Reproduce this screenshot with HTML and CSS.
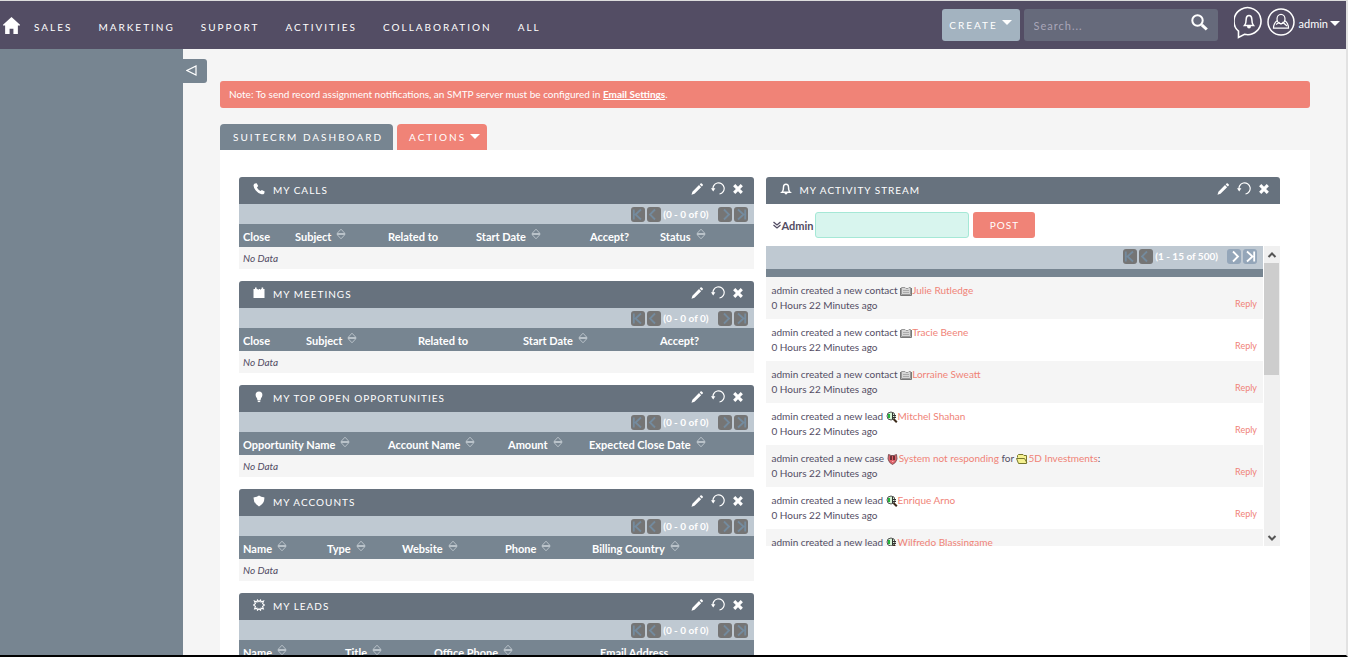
FILE: index.html
```
<!DOCTYPE html>
<html lang="en">
<head>
<meta charset="utf-8">
<title>SuiteCRM Dashboard</title>
<link rel="stylesheet" href="styles.css">
</head>
<body>
<svg class="sprite" aria-hidden="true">
  <symbol id="pencil" viewBox="0 0 12 12"><path fill="currentColor" d="M0.5 11.7 1.4 8.7 8 2.1 10.1 4.2 3.5 10.8ZM8.7 1.4 9.8 0.3Q10.3 0 10.8 0.4L11.8 1.4Q12.1 1.9 11.8 2.4L10.8 3.5Z"/></symbol>
  <symbol id="refresh" viewBox="0 0 14 13"><path fill="none" stroke="currentColor" stroke-width="1.2" d="M2.2 8A5.6 5.6 0 1 1 8.5 12"/><path fill="currentColor" d="M0 6.2H4.4L2.2 9.4Z"/></symbol>
  <symbol id="close" viewBox="0 0 10 10"><path stroke="currentColor" stroke-width="3.1" d="M1.2 1.2 8.8 8.8M8.8 1.2 1.2 8.8"/></symbol>
  <symbol id="sort" viewBox="0 0 10 12"><path fill="none" stroke="currentColor" d="M1 5.500 5 1.200 9 5.500ZM1 6.500 5 10.800 9 6.500Z"/></symbol>
  <symbol id="first" viewBox="0 0 14 15"><path fill="none" stroke="currentColor" stroke-width="1.8" d="M2.8 2.5V12.5M10 2.5 4.5 7.5 10 12.5"/></symbol>
  <symbol id="prev" viewBox="0 0 14 15"><path fill="none" stroke="currentColor" stroke-width="1.8" d="M8 2.5 3 7.5 8 12.5"/></symbol>
  <symbol id="next" viewBox="0 0 14 15"><path fill="none" stroke="currentColor" stroke-width="1.8" d="M6 2.5 11 7.5 6 12.5"/></symbol>
  <symbol id="last" viewBox="0 0 14 15"><path fill="none" stroke="currentColor" stroke-width="1.8" d="M11.2 2.5V12.5M4 2.5 9.5 7.5 4 12.5"/></symbol>
  <symbol id="bell" viewBox="0 0 12 12"><path fill="none" stroke="currentColor" stroke-width="1.4" d="M2 9.2Q3.5 8 3.5 4Q3.5 1.2 6 1.2T8.5 4Q8.5 8 10 9.2Z"/><path fill="currentColor" d="M4.4 9.5H7.6Q7.4 11.6 6 11.6T4.4 9.5Z"/></symbol>
  <symbol id="phone" viewBox="0 0 12 12"><path fill="currentColor" d="M1.8 0.5 3.7 0.2 5.2 3 3.9 4.5Q5 6.7 7.4 8.1L8.9 7 11.7 8.6 11.2 10.5Q10.2 11.6 8.6 11.3Q5.2 10.4 2.8 7.4Q0.6 4.6 0.5 2.4Q0.7 1 1.8 0.5Z"/></symbol>
  <symbol id="calendar" viewBox="0 0 12 12"><path fill="currentColor" d="M0.5 3H11.5V11H0.5ZM0.5 2H2V0.5H3.6V2H4.8V3.4H0.5ZM5.5 2H7V3.4H5.5ZM7.5 2H8.6V0.5H10.2V2H11.5V3.4H7.5Z"/></symbol>
  <symbol id="bulb" viewBox="0 0 12 12"><path fill="currentColor" d="M6 0.5Q9.4 0.8 9.4 4Q9.3 5.8 8 7.3L7.6 9H4.4L4 7.3Q2.7 5.8 2.6 4Q2.6 0.8 6 0.5ZM4.6 9.4H7.4V10.6Q6 11.8 4.6 10.6Z"/></symbol>
  <symbol id="shield" viewBox="0 0 12 12"><path fill="currentColor" d="M6 0.6Q8.4 2.4 11.3 2.2Q12 8 6 11.4Q0 8 0.7 2.2Q3.6 2.4 6 0.6Z"/></symbol>
  <symbol id="gear" viewBox="0 0 12 12"><path fill="none" stroke="currentColor" stroke-width="1.1" d="M6 2.600 7.600 1 8 3 10.600 2 9.600 4.600 11.400 6 9.600 7.400 10.400 9.900 8 9.200 7.600 11.200 6 9.800 4.400 11.200 4 9.200 1.600 9.900 2.400 7.400 0.600 6 2.400 4.600 1.400 2 4 3 4.400 1Z"/></symbol>
  <symbol id="contact" viewBox="0 0 12 12"><path fill="#d5d5d5" stroke="#999" d="M1.5 2.5H5L6 3.5H8L9 2.5H10.5V9.5H1.5Z"/><path stroke="#777" d="M.5 3V10.500H11.500V3" fill="none"/><path stroke="#aaa" d="M3 5.500H9M3 7.500H9"/></symbol>
  <symbol id="lead" viewBox="0 0 12 12"><circle cx="5" cy="5" r="4" fill="#d8f5d8" stroke="#555"/><path stroke="#3b2a1a" stroke-width="2" d="M7.5 8 10.800 11.300"/><path stroke="#22b53a" stroke-width="2" d="M3 3V7"/><path stroke="#333" d="M6.500 2V8M7 4.500H10M7 6.500H10"/></symbol>
  <symbol id="case" viewBox="0 0 12 12"><path fill="#e0626a" stroke="#80565a" d="M1.500 1.500 4 2.500H7L9.500 1.500 10 6Q9 10 5.500 11.500Q2 10 1 6Z"/><path stroke="#4b2226" stroke-width="1.500" d="M4 3V7M7 3V7"/><path stroke="#f9b4b4" d="M5 8.500H6.500"/></symbol>
  <symbol id="account" viewBox="0 0 12 12"><path fill="#f5f190" stroke="#77772f" d="M1.500 4.500V2.500L2.500 1.500H7L8 2.500H10.500V10.500H2.500L.5 5.500H8.500L11 10"/></symbol>
</svg>

<header class="topbar">
  <a class="home" href="#" aria-label="Home"><svg viewBox="0 0 16 16"><path fill="#fff" d="M8 0 16 7.300V8H14V16H9.800V11H6.200V16H2V8H0V7.300Z"/></svg></a>
  <nav class="menu">
    <a href="#">SALES</a><a href="#">MARKETING</a><a href="#">SUPPORT</a><a href="#">ACTIVITIES</a><a href="#">COLLABORATION</a><a href="#">ALL</a>
  </nav>
  <div class="tools">
    <button class="create">CREATE<span class="caret"></span></button>
    <form class="search">
      <input type="text" placeholder="Search..." aria-label="Search">
      <button type="button" aria-label="Run search"><svg viewBox="0 0 17 17"><circle cx="6.500" cy="6.500" r="5.200" fill="none" stroke="#fff" stroke-width="2"/><path stroke="#fff" stroke-width="3" d="M10.800 10.800 15.800 15.500"/></svg></button>
    </form>
    <button class="round" aria-label="Alerts"><svg viewBox="0 0 30 33"><path fill="none" stroke="#fff" stroke-width="1.600" d="M4.500 25.200A13.500 13.500 0 1 1 10.500 28.300L4.500 31.500Z"/><path fill="none" stroke="#fff" stroke-width="1.500" d="M10.500 19.500Q12.200 17.500 12.200 13Q12.400 9.500 15 9.500T17.800 13Q17.800 17.500 19.500 19.500Z"/><path fill="#fff" d="M13 20H17Q17 22.500 15 22.500T13 20Z"/></svg></button>
    <button class="user"><svg viewBox="0 0 28 28"><circle cx="14" cy="14" r="13" fill="none" stroke="#fff" stroke-width="1.500"/><g fill="none" stroke="#fff" stroke-width="1.200"><ellipse cx="14" cy="11" rx="4" ry="4.700"/><path d="M10.500 12.500Q6.500 15 6.500 20.200H21.500Q21.500 15 17.500 12.500M9 16.500 12 14.500Q14 17.500 16 14.500L20 18"/></g></svg>admin<span class="caret"></span></button>
  </div>
</header>

<div class="layout">
  <aside class="sidebar"><button class="toggle" aria-label="Collapse sidebar"><svg viewBox="0 0 11 11"><path fill="none" stroke="#fff" stroke-width="1.200" d="M10 1V10L1 5.500Z"/></svg></button></aside>
  <main class="content">
    <p class="alert">Note: To send record assignment notifications, an SMTP server must be configured in <a href="#">Email Settings</a>.</p>
    <div class="tabs"><button class="tab">SUITECRM DASHBOARD</button><button class="tab actions">ACTIONS<span class="caret"></span></button></div>
    <div class="board">
      <div class="column">
        <section class="dashlet">
          <div class="head"><svg class="kind"><use href="#phone"/></svg><h2>MY CALLS</h2><button aria-label="Edit"><svg><use href="#pencil"/></svg></button><button aria-label="Refresh"><svg class="wide"><use href="#refresh"/></svg></button><button aria-label="Close"><svg class="small"><use href="#close"/></svg></button></div>
          <div class="pager"><button disabled aria-label="First"><svg><use href="#first"/></svg></button><button disabled aria-label="Previous"><svg><use href="#prev"/></svg></button><span>(0 - 0 of 0)</span><button disabled aria-label="Next"><svg><use href="#next"/></svg></button><button disabled aria-label="Last"><svg><use href="#last"/></svg></button></div>
          <table class="calls"><thead><tr><th>Close</th><th>Subject<svg><use href="#sort"/></svg></th><th>Related to</th><th>Start Date<svg><use href="#sort"/></svg></th><th>Accept?</th><th>Status<svg><use href="#sort"/></svg></th></tr></thead><tbody><tr><td colspan="6">No Data</td></tr></tbody></table>
        </section>
        <section class="dashlet">
          <div class="head"><svg class="kind"><use href="#calendar"/></svg><h2>MY MEETINGS</h2><button aria-label="Edit"><svg><use href="#pencil"/></svg></button><button aria-label="Refresh"><svg class="wide"><use href="#refresh"/></svg></button><button aria-label="Close"><svg class="small"><use href="#close"/></svg></button></div>
          <div class="pager"><button disabled aria-label="First"><svg><use href="#first"/></svg></button><button disabled aria-label="Previous"><svg><use href="#prev"/></svg></button><span>(0 - 0 of 0)</span><button disabled aria-label="Next"><svg><use href="#next"/></svg></button><button disabled aria-label="Last"><svg><use href="#last"/></svg></button></div>
          <table class="meetings"><thead><tr><th>Close</th><th>Subject<svg><use href="#sort"/></svg></th><th>Related to</th><th>Start Date<svg><use href="#sort"/></svg></th><th>Accept?</th></tr></thead><tbody><tr><td colspan="5">No Data</td></tr></tbody></table>
        </section>
        <section class="dashlet">
          <div class="head"><svg class="kind"><use href="#bulb"/></svg><h2>MY TOP OPEN OPPORTUNITIES</h2><button aria-label="Edit"><svg><use href="#pencil"/></svg></button><button aria-label="Refresh"><svg class="wide"><use href="#refresh"/></svg></button><button aria-label="Close"><svg class="small"><use href="#close"/></svg></button></div>
          <div class="pager"><button disabled aria-label="First"><svg><use href="#first"/></svg></button><button disabled aria-label="Previous"><svg><use href="#prev"/></svg></button><span>(0 - 0 of 0)</span><button disabled aria-label="Next"><svg><use href="#next"/></svg></button><button disabled aria-label="Last"><svg><use href="#last"/></svg></button></div>
          <table class="opportunities"><thead><tr><th>Opportunity Name<svg><use href="#sort"/></svg></th><th>Account Name<svg><use href="#sort"/></svg></th><th>Amount<svg><use href="#sort"/></svg></th><th>Expected Close Date<svg><use href="#sort"/></svg></th></tr></thead><tbody><tr><td colspan="4">No Data</td></tr></tbody></table>
        </section>
        <section class="dashlet">
          <div class="head"><svg class="kind"><use href="#shield"/></svg><h2>MY ACCOUNTS</h2><button aria-label="Edit"><svg><use href="#pencil"/></svg></button><button aria-label="Refresh"><svg class="wide"><use href="#refresh"/></svg></button><button aria-label="Close"><svg class="small"><use href="#close"/></svg></button></div>
          <div class="pager"><button disabled aria-label="First"><svg><use href="#first"/></svg></button><button disabled aria-label="Previous"><svg><use href="#prev"/></svg></button><span>(0 - 0 of 0)</span><button disabled aria-label="Next"><svg><use href="#next"/></svg></button><button disabled aria-label="Last"><svg><use href="#last"/></svg></button></div>
          <table class="accounts"><thead><tr><th>Name<svg><use href="#sort"/></svg></th><th>Type<svg><use href="#sort"/></svg></th><th>Website<svg><use href="#sort"/></svg></th><th>Phone<svg><use href="#sort"/></svg></th><th>Billing Country<svg><use href="#sort"/></svg></th></tr></thead><tbody><tr><td colspan="5">No Data</td></tr></tbody></table>
        </section>
        <section class="dashlet">
          <div class="head"><svg class="kind"><use href="#gear"/></svg><h2>MY LEADS</h2><button aria-label="Edit"><svg><use href="#pencil"/></svg></button><button aria-label="Refresh"><svg class="wide"><use href="#refresh"/></svg></button><button aria-label="Close"><svg class="small"><use href="#close"/></svg></button></div>
          <div class="pager"><button disabled aria-label="First"><svg><use href="#first"/></svg></button><button disabled aria-label="Previous"><svg><use href="#prev"/></svg></button><span>(0 - 0 of 0)</span><button disabled aria-label="Next"><svg><use href="#next"/></svg></button><button disabled aria-label="Last"><svg><use href="#last"/></svg></button></div>
          <table class="leads"><thead><tr><th>Name<svg><use href="#sort"/></svg></th><th>Title<svg><use href="#sort"/></svg></th><th>Office Phone<svg><use href="#sort"/></svg></th><th>Email Address</th></tr></thead></table>
        </section>
      </div>
      <div class="column">
        <section class="dashlet">
          <div class="head"><svg class="kind"><use href="#bell"/></svg><h2>MY ACTIVITY STREAM</h2><button aria-label="Edit"><svg><use href="#pencil"/></svg></button><button aria-label="Refresh"><svg class="wide"><use href="#refresh"/></svg></button><button aria-label="Close"><svg class="small"><use href="#close"/></svg></button></div>
          <form class="post"><svg viewBox="0 0 8 8"><path fill="none" stroke="#534d64" stroke-width="1.300" d="M.5 1 4 4 7.500 1M.5 4 4 7 7.500 4"/></svg><label for="status">Admin</label><input id="status" type="text"><button type="button">POST</button></form>
          <div class="stream">
            <div class="feed">
              <div class="pager"><button disabled aria-label="First"><svg><use href="#first"/></svg></button><button disabled aria-label="Previous"><svg><use href="#prev"/></svg></button><span>(1 - 15 of 500)</span><button aria-label="Next"><svg><use href="#next"/></svg></button><button aria-label="Last"><svg><use href="#last"/></svg></button></div>
              <ul>
                <li><div>admin created a new contact <svg><use href="#contact"/></svg><a href="#">Julie Rutledge</a><br><time>0 Hours 22 Minutes ago</time></div><a class="reply" href="#">Reply</a></li>
                <li><div>admin created a new contact <svg><use href="#contact"/></svg><a href="#">Tracie Beene</a><br><time>0 Hours 22 Minutes ago</time></div><a class="reply" href="#">Reply</a></li>
                <li><div>admin created a new contact <svg><use href="#contact"/></svg><a href="#">Lorraine Sweatt</a><br><time>0 Hours 22 Minutes ago</time></div><a class="reply" href="#">Reply</a></li>
                <li><div>admin created a new lead <svg><use href="#lead"/></svg><a href="#">Mitchel Shahan</a><br><time>0 Hours 22 Minutes ago</time></div><a class="reply" href="#">Reply</a></li>
                <li><div>admin created a new case <svg><use href="#case"/></svg><a href="#">System not responding</a> for <svg><use href="#account"/></svg><a href="#">5D Investments</a>:<br><time>0 Hours 22 Minutes ago</time></div><a class="reply" href="#">Reply</a></li>
                <li><div>admin created a new lead <svg><use href="#lead"/></svg><a href="#">Enrique Arno</a><br><time>0 Hours 22 Minutes ago</time></div><a class="reply" href="#">Reply</a></li>
                <li><div>admin created a new lead <svg><use href="#lead"/></svg><a href="#">Wilfredo Blassingame</a></div></li>
              </ul>
            </div>
            <div class="scrollbar"><svg viewBox="0 0 16 17"><path fill="none" stroke="#555" stroke-width="2" d="M4.500 11 8 7.500 11.500 11"/></svg><i></i><svg viewBox="0 0 16 17"><path fill="none" stroke="#555" stroke-width="2" d="M4.500 7 8 10.500 11.500 7"/></svg></div>
          </div>
        </section>
      </div>
    </div>
  </main>
</div>
</body>
</html>
```
FILE: styles.css
```
* { box-sizing: border-box; }
html { height: 100%; }
body {
  margin: 0;
  height: 100vh;
  overflow: hidden;
  display: flex;
  flex-direction: column;
  border-top: 1px solid #ddd;
  border-bottom: 2px solid #000;
  border-right: 2px solid #e2e2e2;
  background: #f5f5f5;
  color: #534d64;
  font: 10px/15px Lato, sans-serif;
}
.sprite { position: absolute; width: 0; height: 0; }
button, input { font: inherit; color: inherit; border: 0; padding: 0; margin: 0; background: none; }
button { cursor: pointer; }
a { color: #f08377; text-decoration: none; }
svg { display: block; flex: none; }
.caret {
  display: inline-block;
  border: 5px solid transparent;
  border-top-color: #fff;
  border-bottom: 0;
}

.topbar {
  flex: none;
  height: 48px;
  display: flex;
  align-items: center;
  padding: 0 6px 0 3px;
  background: #534d64;
  color: #fff;
}
.home svg { width: 17px; height: 17px; }
.menu { display: flex; gap: 26px; margin-left: 14px; padding-top: 4px; }
.menu a { color: #fff; letter-spacing: 2px; }
.tools { display: flex; align-items: center; margin-left: auto; }
.create {
  width: 78px;
  height: 32px;
  display: flex;
  align-items: center;
  justify-content: center;
  gap: 4px;
  border-radius: 3px;
  background: #a3b3c0;
  letter-spacing: 2px;
}
.create .caret { margin-bottom: 5px; }
.search {
  width: 194px;
  height: 32px;
  display: flex;
  align-items: center;
  margin: 0 16px 0 4px;
  padding: 0 10px;
  border-radius: 3px;
  background: #666a7b;
}
.search input { flex: 1; min-width: 0; font-size: 11px; letter-spacing: 1px; outline: 0; }
.search input::placeholder { color: #a9a6b9; opacity: 1; }
.search button { margin-bottom: 6px; }
.search svg { width: 17px; height: 17px; }
.round { margin-bottom: 6px; }
.round svg { width: 30px; height: 33px; }
.user { display: flex; align-items: center; margin: 0 0 4px 3px; font-size: 11px; }
.user svg { width: 28px; height: 28px; margin: 0 4px 2px 0; }
.user .caret { margin-left: 2px; }

.layout { flex: 1; min-height: 0; display: flex; }
.sidebar { position: relative; flex: none; width: 183px; background: #778591; }
.toggle {
  position: absolute;
  left: 100%;
  top: 10px;
  width: 24px;
  height: 24px;
  padding: 0 3px 2px;
  border-radius: 0 3px 3px 0;
  background: #778591;
}
.toggle svg { width: 11px; height: 11px; }
.content {
  flex: 1;
  min-width: 0;
  min-height: 0;
  overflow: hidden;
  display: flex;
  flex-direction: column;
  padding: 32px 36px 0 37px;
}
.alert {
  flex: none;
  margin: 0 0 16px;
  padding: 6px 9px;
  border-radius: 3px;
  background: #f08377;
  color: #fff;
}
.alert a { color: #fff; font-weight: 700; text-decoration: underline; }
.tabs { flex: none; display: flex; gap: 4px; }
.tab {
  height: 26px;
  padding: 0 10px 0 13px;
  border-radius: 4px 4px 0 0;
  background: #778591;
  color: #fff;
  letter-spacing: 2px;
}
.actions {
  display: flex;
  align-items: center;
  gap: 4px;
  padding: 0 7px 0 12px;
  background: #f08377;
}
.actions .caret { margin-bottom: 2px; }
.board {
  flex: 1;
  min-height: 0;
  overflow: hidden;
  display: flex;
  gap: 12px;
  padding: 27px 30px 0 19px;
  background: #fff;
}
.column { flex: 1; min-width: 0; }
.dashlet { margin-bottom: 12px; }
.head {
  height: 27px;
  display: flex;
  align-items: center;
  gap: 8px;
  padding: 0 11px 0 14px;
  border-radius: 3px 3px 0 0;
  background: #67727e;
  color: #fff;
}
.head h2 { flex: 1; margin: 0; font-size: 10px; font-weight: 400; letter-spacing: 1px; }
.head svg { width: 12px; height: 12px; margin-bottom: 4px; }
.head .wide { width: 14px; height: 13px; }
.head .small { width: 10px; height: 10px; }
.head .kind { margin-bottom: 3px; }
.pager {
  height: 20px;
  display: flex;
  align-items: center;
  justify-content: flex-end;
  gap: 2px;
  padding-right: 6px;
  background: #bfc9d2;
  color: #fff;
  font-weight: 700;
}
.pager span { margin-right: 7px; }
.pager button { border-radius: 3px; background: #94a6b9; }
.pager button:disabled { background: #757575; color: #748b9e; }
.pager svg { width: 14px; height: 15px; }
table { width: 100%; table-layout: fixed; border-collapse: collapse; font-size: 11px; }
th {
  height: 23px;
  padding: 1px 0 0 4px;
  background: #778591;
  color: #fff;
  text-align: left;
  white-space: nowrap;
}
th svg {
  display: inline-block;
  width: 10px;
  height: 12px;
  margin: -2px 0 0 5px;
  vertical-align: 1px;
  color: #b9c2c9;
}
td { height: 22px; padding: 0 4px; background: #f5f5f5; font-size: 10px; font-style: italic; }
.calls th:nth-child(1) { width: 52px; }
.calls th:nth-child(2) { width: 93px; }
.calls th:nth-child(3) { width: 88px; }
.calls th:nth-child(4) { width: 114px; }
.calls th:nth-child(5) { width: 70px; }
.meetings th:nth-child(1) { width: 63px; }
.meetings th:nth-child(2) { width: 112px; }
.meetings th:nth-child(3) { width: 105px; }
.meetings th:nth-child(4) { width: 137px; }
.opportunities th:nth-child(1) { width: 145px; }
.opportunities th:nth-child(2) { width: 120px; }
.opportunities th:nth-child(3) { width: 81px; }
.accounts th:nth-child(1) { width: 84px; }
.accounts th:nth-child(2) { width: 75px; }
.accounts th:nth-child(3) { width: 103px; }
.accounts th:nth-child(4) { width: 87px; }
.leads th:nth-child(1) { width: 102px; }
.leads th:nth-child(2) { width: 89px; }
.leads th:nth-child(3) { width: 166px; }

.post { height: 42px; display: flex; align-items: center; padding-left: 7px; }
.post svg { width: 8px; height: 8px; margin-right: 1px; }
.post label { margin-right: 2px; font-size: 11px; font-weight: 700; }
.post input {
  width: 154px;
  height: 26px;
  margin-right: 4px;
  padding: 0 6px;
  border: 1px solid #a5e8d6;
  border-radius: 3px;
  background: #d8f5ee;
}
.post button {
  width: 62px;
  height: 26px;
  border-radius: 3px;
  background: #f08377;
  color: #fff;
  letter-spacing: 1px;
}
.stream { display: flex; height: 300px; overflow: hidden; }
.feed { flex: 1; min-width: 0; margin-right: 1px; }
.feed .pager { height: 31px; padding-bottom: 2px; border-bottom: 8px solid #778591; }
.feed ul { margin: 0; padding: 0; list-style: none; }
.feed li {
  display: flex;
  align-items: flex-start;
  justify-content: space-between;
  height: 42px;
  padding: 6px;
}
.feed li:nth-child(odd) { background: #f5f5f5; }
.feed li svg { display: inline-block; width: 12px; height: 12px; margin: -4px 0; vertical-align: 1px; }
.feed .reply { font-size: 9px; padding-top: 13px; }
.scrollbar { width: 16px; display: flex; flex-direction: column; background: #f0f0f0; }
.scrollbar svg { width: 16px; height: 17px; }
.scrollbar i { height: 112px; margin: 0 1px auto 0; background: #cdcdcd; }
```
